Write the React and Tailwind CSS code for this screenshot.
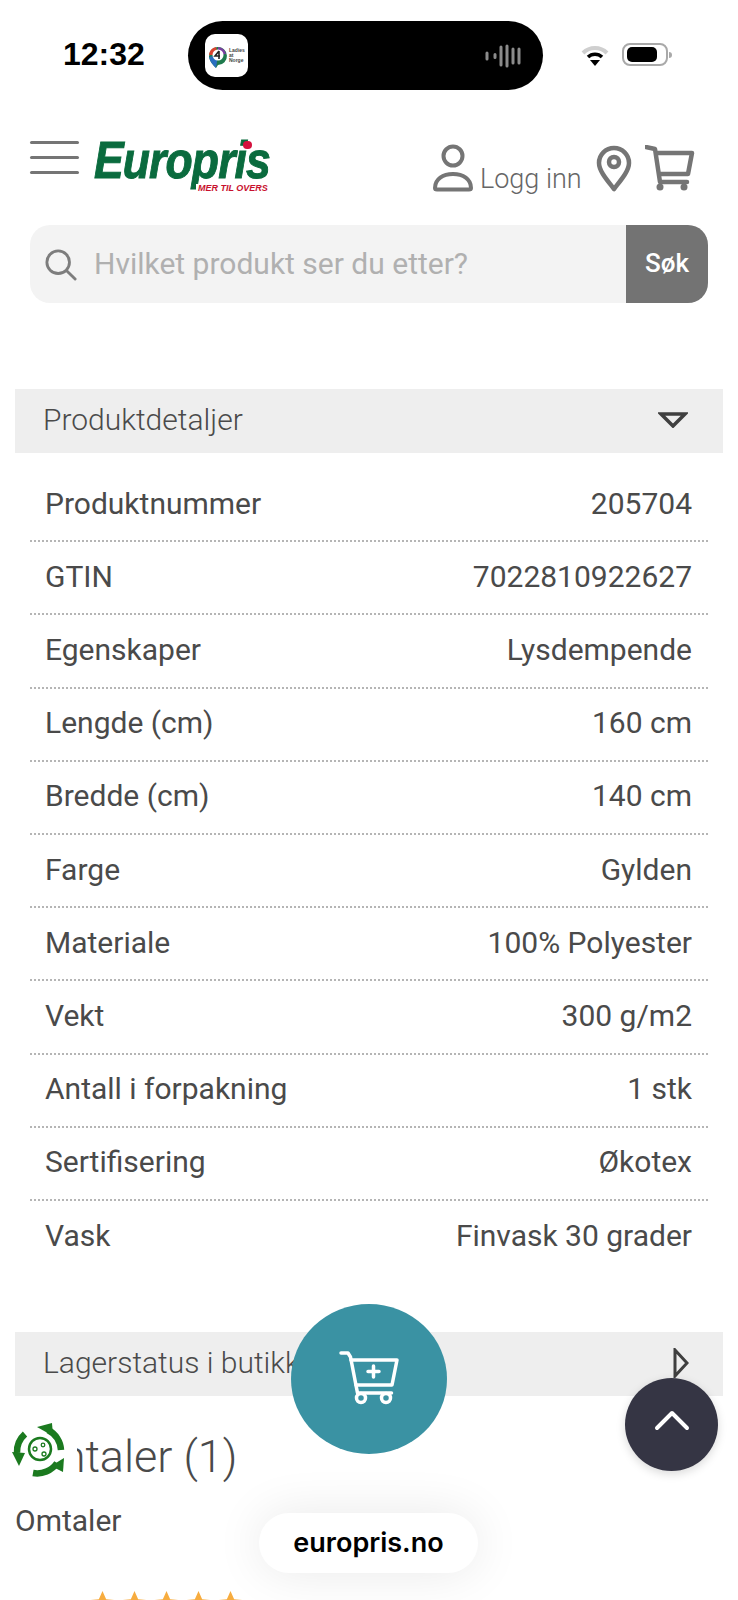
import React from "react";

const ROBOTO = "font-['Roboto',sans-serif]";

const details = [
	["Produktnummer", "205704"],
	["GTIN", "7022810922627"],
	["Egenskaper", "Lysdempende"],
	["Lengde (cm)", "160 cm"],
	["Bredde (cm)", "140 cm"],
	["Farge", "Gylden"],
	["Materiale", "100% Polyester"],
	["Vekt", "300 g/m2"],
	["Antall i forpakning", "1 stk"],
	["Sertifisering", "Økotex"],
	["Vask", "Finvask 30 grader"],
];

const StatusBar = () => (
	<div className="flex h-[110px] items-start">
		<div className="mt-[36px] ml-[63px] w-[125px] font-['Liberation_Sans',sans-serif] text-[32px] leading-[36px] font-bold text-black">
			12:32
		</div>
		<div className="mt-[21px] flex h-[69px] w-[355px] items-center justify-between rounded-full bg-black pr-[18px] pl-[17px]">
			<div className="flex h-[43px] w-[43px] items-center gap-[1px] overflow-hidden rounded-[10px] bg-white pl-[1px]">
				<svg width="22" height="26" viewBox="0 0 22 26" className="shrink-0">
					<path d="M3 14a9 9 0 1 1 9 8l-2 3c-3-3-6-6-7-11z" fill="#1f7a4d" />
					<path d="M3 12a9 9 0 0 1 7-8l2 8z" fill="#d8432f" />
					<path d="M12 4a9 9 0 0 1 8 7l-8 1z" fill="#7b3fa0" />
					<path d="M3 14l9-2-2 13c-3-3-6-6-7-11z" fill="#2a6fc0" />
					<circle cx="12" cy="12" r="5.5" fill="#fff" />
					<path d="M13 8l-4 5h5M13 8v8" fill="none" stroke="#222" strokeWidth="1.6" />
				</svg>
				<div className="font-['Liberation_Sans',sans-serif] text-[5px] leading-[5px] font-bold text-[#444]">
					Ladies
					<br />
					at Norge
				</div>
			</div>
			<svg width="40" height="24" viewBox="0 0 40 24">
				<g stroke="#8b8b8b" strokeWidth="3" strokeLinecap="round">
					<path d="M2 9v6M10 10.5v3M16 3v18M22 2v20M28 5v14M34 5v14" />
				</g>
			</svg>
		</div>
		<svg width="28" height="23" viewBox="0 0 28 23" className="mt-[44px] ml-[38px]">
			<path d="M2 9a17 17 0 0 1 24 0" fill="none" stroke="#cfcfcf" strokeWidth="4" />
			<path d="M7 13a10 10 0 0 1 14 0" fill="none" stroke="#000" strokeWidth="3.5" />
			<path d="M9 16h10l-5 6z" fill="#000" />
		</svg>
		<div className="mt-[43px] ml-[13px] flex items-center">
			<div className="flex h-[23px] w-[46px] items-center rounded-[8px] border-2 border-[#a9a9a9] pl-[3px]">
				<div className="h-[15px] w-[30px] rounded-[5px] bg-black" />
			</div>
			<div className="ml-[1px] h-[6px] w-[3px] rounded-r-full bg-[#a9a9a9]" />
		</div>
	</div>
);

const Logo = () => (
	<div className="relative ml-[15px] h-[52px] w-[178px]">
		<div className="-mt-[1px] origin-left scale-x-[0.855] font-['Liberation_Sans',sans-serif] text-[52px] leading-[42px] font-bold tracking-[-1px] whitespace-nowrap text-[#0a6b3e] italic [-webkit-text-stroke:1px_#0a6b3e]">
			Europris
		</div>
		<div className="absolute top-[1px] left-[149px] h-[8px] w-[9px] rounded-full bg-[#d4123e]" />
		<div className="absolute top-[44px] left-[102px] bg-white pl-[2px] font-['Liberation_Sans',sans-serif] text-[9px] leading-[9px] font-bold whitespace-nowrap text-[#c8102e] italic">
			MER TIL OVERS
		</div>
	</div>
);

const Header = () => (
	<div className="flex items-start pt-[30px] pl-[30px]">
		<div className="flex w-[49px] flex-col gap-[12px] pt-[1px]">
			<div className="h-[3px] rounded-full bg-[#757575]" />
			<div className="h-[3px] rounded-full bg-[#757575]" />
			<div className="h-[3px] rounded-full bg-[#757575]" />
		</div>
		<Logo />
		<svg width="42" height="48" viewBox="0 0 42 48" className="mt-[4px] ml-[160px]" fill="none" stroke="#757575" strokeWidth="4">
			<circle cx="21" cy="12" r="9.5" />
			<path d="M3 44c0-9 8-14 18-14s18 5 18 14c0 1-1 1.500-2 1.500H5c-1 0-2-.5-2-1.500z" strokeLinejoin="round" />
		</svg>
		<div className={`${ROBOTO} mt-[21px] ml-[6px] text-[27px] leading-[36px] font-light text-[#666]`}>Logg inn</div>
		<svg width="36" height="48" viewBox="0 0 36 48" className="mt-[5px] ml-[14px]" fill="none" stroke="#757575" strokeWidth="4.5">
			<path d="M18 44C11 35 3 26 3 18a15 15 0 0 1 30 0c0 8-8 17-15 26z" strokeLinejoin="round" />
			<circle cx="18" cy="17" r="5" />
		</svg>
		<svg width="50" height="48" viewBox="0 0 50 48" className="mt-[5px] ml-[13px]" fill="none" stroke="#757575" strokeWidth="4.5">
			<path d="M1 2l9 2 5 33h27M12 8h35l-4 21H14" strokeLinejoin="round" strokeLinecap="round" />
			<circle cx="15" cy="42" r="3.500" fill="#757575" stroke="none" />
			<circle cx="39" cy="42" r="3.500" fill="#757575" stroke="none" />
		</svg>
	</div>
);

const SearchBar = () => (
	<div className="mx-[30px] mt-[28px] flex h-[78px] overflow-hidden rounded-[20px] bg-[#f3f3f3]">
		<svg width="32" height="32" viewBox="0 0 34 34" className="mt-[24px] ml-[15px] shrink-0" fill="none" stroke="#7d7d7d" strokeWidth="3">
			<circle cx="14" cy="14" r="12" />
			<path d="M23 23l9 9" strokeLinecap="round" />
		</svg>
		<div className={`${ROBOTO} ml-[17px] flex-1 text-[30px] leading-[78px] text-[#b0b0b0]`}>
			Hvilket produkt ser du etter?
		</div>
		<div className={`${ROBOTO} flex w-[82px] items-center justify-center bg-[#737373] pb-[2px] text-[26px] font-medium text-white`}>
			Søk
		</div>
	</div>
);

const AccordionBar = ({ title, children, className }) => (
	<div className={`mx-[15px] flex h-[64px] items-center justify-between bg-[#eeeeee] pb-[3px] pl-[28px] ${className}`}>
		<span className={`${ROBOTO} text-[30px] font-light text-[#4a4a4a]`}>{title}</span>
		{children}
	</div>
);

const DetailRows = () => (
	<div className="mx-[30px] mt-[16px]">
		{details.map(([label, value], i) => (
			<div
				key={label}
				className={`${ROBOTO} flex h-[73.2px] items-center justify-between pr-[16px] pb-[3px] pl-[15px] text-[30px] text-[#4a4a4a] ${
					i < details.length - 1 ? "border-b-2 border-dotted border-[#b5b5b5]" : ""
				}`}
			>
				<span>{label}</span>
				<span>{value}</span>
			</div>
		))}
	</div>
);

const Reviews = () => (
	<div className="px-[15px] pt-[31px]">
		<div className={`${ROBOTO} text-[45px] leading-[60px] font-light text-[#4a4a4a]`}>Omtaler (1)</div>
		<div className={`${ROBOTO} mt-[16px] text-[30px] leading-[36px] text-[#4a4a4a]`}>Omtaler</div>
		<div className="mt-[52px] ml-[75px] flex gap-[7px]">
			{[0, 1, 2, 3, 4].map((i) => (
				<svg key={i} width="25" height="24" viewBox="0 0 24 23" className="shrink-0">
					<path d="M12 0l3.500 7.800 8.500.9-6.400 5.700 1.800 8.400L12 18.500l-7.400 4.300 1.800-8.400L0 8.700l8.500-.9z" fill="#f7ac3f" />
				</svg>
			))}
		</div>
	</div>
);

const RecycleBadge = () => (
	<div className="absolute top-[1415px] left-[5px] bg-white pr-[2px]">
		<svg width="70" height="70" viewBox="0 0 70 70" fill="none" className="block">
			<g stroke="#1b7a1f" strokeWidth="6.500">
				<path d="M43 15a24 24 0 0 1 13 20" />
				<path d="M20 19a24 24 0 0 0-8 19" />
				<path d="M28 58a24 24 0 0 0 24-10" />
			</g>
			<g fill="#1b7a1f">
				<path d="M32 12l15-4 1 13z" />
				<path d="M7 37l13 1-6 13z" />
				<path d="M46 51l13-8-1 14z" />
			</g>
			<circle cx="35" cy="34" r="11" stroke="#1b7a1f" strokeWidth="2.500" />
			<g stroke="#1b7a1f" strokeWidth="1.300">
				<circle cx="30" cy="34" r="2" />
				<circle cx="38" cy="30" r="1.800" />
				<circle cx="39" cy="39" r="2" />
			</g>
		</svg>
	</div>
);

const AddToCartButton = () => (
	<div className="absolute top-[1304px] left-[291px] flex h-[150px] w-[156px] items-center justify-center rounded-[50%] bg-[#3a92a3]">
		<svg width="80" height="80" viewBox="0 0 80 80" fill="none" stroke="#fff" strokeWidth="3.500" strokeLinecap="round" strokeLinejoin="round" className="mb-[8px] ml-[2px]">
			<path d="M11 18h7l2.500 4 7 36h34" />
			<path d="M21 25h46l-5 25H26" />
			<circle cx="31" cy="63" r="4.500" />
			<circle cx="56" cy="63" r="4.500" />
			<path d="M43.500 31v11M38 36.500h11" />
		</svg>
	</div>
);

const App = () => (
	<div className="relative h-[1600px] overflow-hidden bg-white">
		<StatusBar />
		<Header />
		<SearchBar />
		<AccordionBar title="Produktdetaljer" className="mt-[86px] pr-[35px]">
			<svg width="30" height="16" viewBox="0 0 30 16" fill="none">
				<path d="M3 2h24L15 14z" stroke="#3f3f3f" strokeWidth="3.500" />
			</svg>
		</AccordionBar>
		<DetailRows />
		<AccordionBar title="Lagerstatus i butikk" className="mt-[58px] pr-[34px]">
			<svg width="16" height="30" viewBox="0 0 16 30" fill="none">
				<path d="M2 2v26l12-13z" stroke="#3f3f3f" strokeWidth="3" />
			</svg>
		</AccordionBar>
		<Reviews />
		<RecycleBadge />
		<AddToCartButton />
		<div className="absolute top-[1378px] left-[625px] flex h-[93px] w-[93px] items-center justify-center rounded-full bg-[#353544] shadow-[0_3px_10px_rgba(0,0,0,0.15)]">
			<svg width="36" height="22" viewBox="0 0 36 22" fill="none" stroke="#fff" strokeWidth="4" strokeLinecap="round" strokeLinejoin="round" className="mb-[9px]">
				<path d="M3 19L18 4l15 15" />
			</svg>
		</div>
		<div className="absolute top-[1513px] left-[259px] flex h-[60px] w-[219px] items-center justify-center rounded-full bg-white font-['Inter',sans-serif] text-[27px] font-semibold text-black shadow-[0_0_50px_rgba(0,0,0,0.09)]">
			europris.no
		</div>
	</div>
);

export default App;
